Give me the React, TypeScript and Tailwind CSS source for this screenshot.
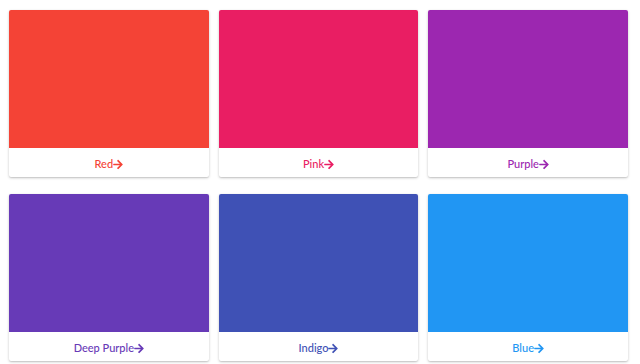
const colors = [
  { name: 'Red', hex: '#f44336' },
  { name: 'Pink', hex: '#e91e63' },
  { name: 'Purple', hex: '#9c27b0' },
  { name: 'Deep Purple', hex: '#673ab7' },
  { name: 'Indigo', hex: '#3f51b5' },
  { name: 'Blue', hex: '#2196f3' },
]

function Arrow({ color }: { color: string }) {
  return (
    <svg width="10" height="11" viewBox="0 0 448 512" fill={color}>
      <path d="M190.5 66.9l22.2-22.2c9.4-9.4 24.6-9.4 33.9 0L441 239c9.4 9.4 9.4 24.6 0 33.9L246.6 467.3c-9.4 9.4-24.6 9.4-33.9 0l-22.2-22.2c-9.5-9.5-9.3-25 .4-34.3L311.4 296H24c-13.3 0-24-10.7-24-24v-32c0-13.3 10.7-24 24-24h287.4L190.9 101.2c-9.8-9.3-10-24.8-.4-34.3z" />
    </svg>
  )
}

export default function App() {
  return (
    <div className="min-h-screen bg-white px-[9px] pt-[10px] font-['Lato',sans-serif]">
      <div className="grid w-[619px] grid-cols-3 gap-x-[10px] gap-y-[17px]">
        {colors.map((c) => (
          <div
            key={c.name}
            className="overflow-hidden rounded-[2px] bg-white shadow-[0_1px_3px_rgba(0,0,0,0.2),0_1px_1px_rgba(0,0,0,0.08)]"
          >
            <div className="h-[138px]" style={{ backgroundColor: c.hex }} />
            <div
              className="flex h-[29px] items-center justify-center pt-[3px] text-[11px] font-medium"
              style={{ color: c.hex }}
            >
              <span>{c.name}</span>
              <Arrow color={c.hex} />
            </div>
          </div>
        ))}
      </div>
    </div>
  )
}
